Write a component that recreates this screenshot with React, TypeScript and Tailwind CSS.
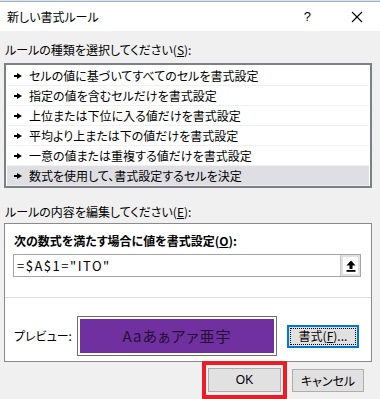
const items = [
  "セルの値に基づいてすべてのセルを書式設定",
  "指定の値を含むセルだけを書式設定",
  "上位または下位に入る値だけを書式設定",
  "平均より上または下の値だけを書式設定",
  "一意の値または重複する値だけを書式設定",
  "数式を使用して、書式設定するセルを決定",
];

function Pointer() {
  return (
    <svg width="8" height="6" viewBox="0 0 8 6" className="shrink-0">
      <rect x="0" y="2" width="4" height="2" fill="#000" />
      <path d="M3 0 L8 3 L3 6 Z" fill="#000" />
    </svg>
  );
}

export default function App() {
  return (
    <div className="w-[380px] h-[399px] overflow-hidden bg-[#f0f0f0] text-black text-[12px] leading-[16px] font-['Noto_Sans_CJK_JP',sans-serif] [font-feature-settings:'palt']">
      <div className="h-[2px] bg-[#dde3ea] border-b border-[#9eb0c2]" />

      {/* title bar */}
      <div className="h-[29px] bg-white flex items-center pl-[7px]">
        <span className="text-[12px]">新しい書式ルール</span>
        <span className="ml-auto mr-[40px] text-[13px] font-['Liberation_Sans',sans-serif]">?</span>
        <svg width="12" height="12" viewBox="0 0 12 12" className="mr-[17px]">
          <path d="M1 1 L11 11 M11 1 L1 11" stroke="#000" strokeWidth="1.1" />
        </svg>
      </div>

      <div className="px-[4px]">
        <div className="mt-[11px] pl-[1px]">
          ルールの種類を選択してください(<span className="underline">S</span>):
        </div>

        {/* rule type list */}
        <div className="mt-[5px] w-[368px] h-[125px] border-2 border-[#7d8187] bg-white p-[1px]">
          {items.map((t, i) => (
            <div
              key={t}
              className={
                "h-[20px] flex items-center gap-[7px] pl-[7px] border-b border-[#f0f0f0] " +
                (i === items.length - 1 ? "bg-[#dedee3]" : "bg-white")
              }
            >
              <Pointer />
              <span>{t}</span>
            </div>
          ))}
        </div>

        <div className="mt-[16px] pl-[1px]">
          ルールの内容を編集してください(<span className="underline">E</span>):
        </div>

        {/* rule description panel */}
        <div className="mt-[3px] w-[368px] h-[139px] border border-[#8a8a8a] bg-white">
          <div className="pt-[9px] pl-[9px] font-bold">
            次の数式を満たす場合に値を書式設定(<span className="underline">O</span>):
          </div>
          <div className="mt-[5px] ml-[8px] w-[348px] h-[23px] flex border border-[#a5a5a5]">
            <div className="flex-1 flex items-center pl-[3px] text-[13px] tracking-[1.5px]">=$A$1="ITO"</div>
            <div className="w-[20px] bg-[#e1e1e1] border-l border-[#c8c8c8] p-[2px]">
              <div className="w-full h-full bg-white flex items-center justify-center">
                <svg width="10" height="12" viewBox="0 0 10 12">
                  <path d="M5 0.5 L9.5 5.5 L6.5 5.5 L6.5 9 L3.5 9 L3.5 5.5 L0.5 5.5 Z" fill="#000" />
                  <rect x="0.5" y="10" width="9" height="1.8" fill="#000" />
                </svg>
              </div>
            </div>
          </div>

          <div className="mt-[20px] h-px bg-[#dcdcdc]" />

          <div className="mt-[18px] flex items-center">
            <span className="ml-[9px] w-[63px]">プレビュー:</span>
            <div className="w-[200px] h-[40px] border border-[#6e6e6e] p-[2px]">
              <div className="w-full h-full bg-[#7030a0] flex items-center justify-center text-[15px] text-[#221033] tracking-[1px]">
                Aaあぁアァ亜宇
              </div>
            </div>
            <div className="ml-[10px] w-[72px] h-[23px] border-2 border-[#0078d7] bg-[#e1e1e1] p-[1px]">
              <div className="w-full h-full border border-dotted border-black flex items-center justify-center leading-none">
                書式(<span className="underline">F</span>)...
              </div>
            </div>
          </div>
        </div>

        {/* buttons */}
        <div className="mt-[6px] flex justify-end pr-[12px] gap-[11px]">
          <div className="relative w-[73px] h-[24px] bg-[#e1e1e1] border border-[#adadad] flex items-center justify-center font-['Liberation_Sans',sans-serif] text-[12px]">
            OK
            <span className="absolute -left-[7px] -right-[7px] -top-[8px] -bottom-[8px] border-[4px] border-[#ed1c24]" />
          </div>
          <div className="mt-[1px] w-[72px] h-[23px] bg-[#e1e1e1] border border-[#adadad] flex items-center justify-center">
            キャンセル
          </div>
        </div>
      </div>
    </div>
  );
}
